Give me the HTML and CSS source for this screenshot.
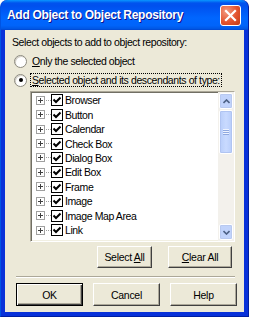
FILE: index.html
```html
<!DOCTYPE html>
<html lang="en">
<head>
    <meta charset="UTF-8">
    <title>Add Object to Object Repository</title>
    <link rel="stylesheet" href="styles.css">
</head>
<body>
    <div class="window">
        <div class="titlebar">
            <span class="title">Add Object to Object Repository</span>
            <span class="close">
                <svg width="13" height="13" viewBox="0 0 13 13">
                    <path d="M2 2 L11 11 M11 2 L2 11" stroke="#fff" stroke-width="2.2" stroke-linecap="square"/>
                </svg>
            </span>
        </div>
        <div class="content">
            <p class="intro">Select objects to add to object repository:</p>

            <label class="radio">
                <span class="radio-dot"></span>
                <span class="radio-text"><u>O</u>nly the selected object</span>
            </label>
            <label class="radio">
                <span class="radio-dot checked"></span>
                <span class="radio-text focus"><u>S</u>elected object and its descendants of type:</span>
            </label>

            <div class="listbox">
                <ul class="tree">
                    <li><span class="expander"></span><span class="check"></span>Browser</li>
                    <li><span class="expander"></span><span class="check"></span>Button</li>
                    <li><span class="expander"></span><span class="check"></span>Calendar</li>
                    <li><span class="expander"></span><span class="check"></span>Check Box</li>
                    <li><span class="expander"></span><span class="check"></span>Dialog Box</li>
                    <li><span class="expander"></span><span class="check"></span>Edit Box</li>
                    <li><span class="expander"></span><span class="check"></span>Frame</li>
                    <li><span class="expander"></span><span class="check"></span>Image</li>
                    <li><span class="expander"></span><span class="check"></span>Image Map Area</li>
                    <li><span class="expander"></span><span class="check"></span>Link</li>
                </ul>
                <div class="scrollbar">
                    <span class="sb-btn">
                        <svg width="7" height="5" viewBox="0 0 7 5"><path d="M0.5 4 L3.5 1 L6.5 4" fill="none" stroke="#4d6185" stroke-width="1.6"/></svg>
                    </span>
                    <span class="sb-thumb"><span class="grip"></span></span>
                    <span class="sb-track"></span>
                    <span class="sb-btn">
                        <svg width="7" height="5" viewBox="0 0 7 5"><path d="M0.5 1 L3.5 4 L6.5 1" fill="none" stroke="#4d6185" stroke-width="1.6"/></svg>
                    </span>
                </div>
            </div>

            <div class="list-buttons">
                <button class="btn btn-small">Select <u>A</u>ll</button>
                <button class="btn btn-small"><u>C</u>lear All</button>
            </div>

            <div class="separator"></div>

            <div class="dialog-buttons">
                <button class="btn default">OK</button>
                <button class="btn">Cancel</button>
                <button class="btn">Help</button>
            </div>
        </div>
    </div>
</body>
</html>
```

FILE: styles.css
```css
body {
    margin: 0;
    background: #fff;
    font-family: "Liberation Sans", Arial, sans-serif;
    font-size: 10.5px;
    letter-spacing: -0.4px;
    color: #000;
}

.window {
    width: 249px;
    height: 317px;
    display: flex;
    flex-direction: column;
    background: #0831d9;
    border-radius: 7px 7px 0 0;
    box-sizing: border-box;
    padding: 0 4px 4px 4px;
    border-left: 1px solid #0054e3;
    border-right: 1px solid #001ea0;
    border-bottom: 1px solid #001ea0;
}

.titlebar {
    height: 30px;
    margin: 0 -4px;
    padding: 0 5px 0 6px;
    display: flex;
    align-items: center;
    justify-content: space-between;
    border-radius: 7px 7px 0 0;
    background: linear-gradient(#0997ff, #0053ee 10%, #0050ee 20%, #0066ff 60%, #0064fa 85%, #0058e6 95%, #0046d0);
}

.title {
    color: #fff;
    font-weight: bold;
    font-size: 12px;
    letter-spacing: -0.3px;
    text-shadow: 1px 1px #0f1089;
}

.close {
    width: 19px;
    height: 19px;
    display: flex;
    align-items: center;
    justify-content: center;
    border: 1px solid #fff;
    border-radius: 3px;
    background: radial-gradient(circle at 30% 30%, #f39a80, #e3542f 55%, #c23b14);
    margin-right: 2px;
}

.content {
    flex: 1;
    background: #ece9d8;
}

.intro {
    margin: 5px 0 0 7px;
    line-height: 14px;
}

.radio {
    display: flex;
    align-items: center;
    margin-left: 9px;
    height: 14px;
    margin-top: 5px;
}

.radio-dot {
    width: 11px;
    height: 11px;
    border-radius: 50%;
    background: #fff;
    border: 1px solid #8c8a7f;
    box-shadow: inset 1px 1px 0 #d4d0c8;
    margin-right: 3px;
    position: relative;
}

.radio-dot.checked::after {
    content: "";
    position: absolute;
    left: 3.5px;
    top: 3.5px;
    width: 4px;
    height: 4px;
    border-radius: 50%;
    background: #000;
}

.radio-text {
    padding: 0 1px;
    border: 1px dotted transparent;
}

.radio-text.focus {
    border-color: #000;
}

.listbox {
    margin: 4px 9px 0 25px;
    height: 149px;
    display: flex;
    background: #fff;
    border-top: 1px solid #aca899;
    border-left: 1px solid #aca899;
    border-right: 1px solid #fff;
    border-bottom: 1px solid #fff;
    box-shadow: inset 1px 1px 0 #716f64, inset -1px -1px 0 #f1efe2;
}

.tree {
    flex: 1;
    list-style: none;
    margin: 0;
    padding: 1px 0 0 5px;
}

.tree li {
    height: 14.45px;
    display: flex;
    align-items: center;
    white-space: nowrap;
    overflow: hidden;
}

.expander {
    width: 7px;
    height: 7px;
    border: 1px solid #a0a0a0;
    margin-right: 1px;
    position: relative;
    background: #fff;
}

.expander::before {
    content: "";
    position: absolute;
    left: 1px;
    top: 3px;
    width: 5px;
    height: 1px;
    background: #404040;
}

.expander::after {
    content: "";
    position: absolute;
    left: 3px;
    top: 1px;
    width: 1px;
    height: 5px;
    background: #404040;
}

.check {
    width: 10px;
    height: 10px;
    border: 1.5px solid #000;
    margin-left: 5px;
    margin-right: 2px;
    background: #fff url("data:image/svg+xml,%3Csvg xmlns='http://www.w3.org/2000/svg' width='10' height='10'%3E%3Cpath d='M1.5 4.5 L4 7 L8.5 2.5' fill='none' stroke='%23000' stroke-width='2'/%3E%3C/svg%3E") no-repeat;
    position: relative;
}

.check::before {
    content: "";
    position: absolute;
    left: -6.5px;
    top: 4.5px;
    width: 5px;
    border-top: 1px dotted #a0a0a0;
}

.scrollbar {
    width: 16px;
    display: flex;
    flex-direction: column;
    background: #f3f1ec;
    padding: 1px 0;
}

.sb-btn {
    height: 14px;
    margin: 0 1px;
    display: flex;
    align-items: center;
    justify-content: center;
    border: 1px solid #fff;
    border-radius: 2px;
    background: #c1d3fb;
    box-shadow: 0 0 0 1px #b8c9f0 inset;
}

.sb-thumb {
    height: 42px;
    margin: 1px 1px 0;
    border: 1px solid #fff;
    border-radius: 2px;
    background: linear-gradient(90deg, #b8cdfa, #c9daff 50%, #b8cdfa);
    box-shadow: 0 0 0 1px #b0c4f2 inset;
    display: flex;
    align-items: center;
    justify-content: center;
}

.grip {
    width: 6px;
    height: 6px;
    background: repeating-linear-gradient(#eef3ff 0 1px, #8fa8e0 1px 2px);
}

.sb-track {
    flex: 1;
}

.list-buttons {
    display: flex;
    justify-content: flex-end;
    gap: 16px;
    margin: 4px 12px 0 0;
}

.btn {
    font-family: "Liberation Sans", Arial, sans-serif;
    font-size: 10.5px;
    letter-spacing: -0.3px;
    color: #000;
    width: 67px;
    height: 23px;
    padding: 0;
    background: #ece9d8;
    border: 1px solid;
    border-color: #fff #404040 #404040 #fff;
    box-shadow: inset -1px -1px 0 #aca899;
}

.btn-small {
    height: 22px;
    width: 64px;
}

.btn-small:first-child {
    width: 55px;
}

.btn.default {
    border: 1px solid #000;
    box-shadow: inset 1px 1px 0 #fff, inset -1px -1px 0 #404040, inset -2px -2px 0 #aca899;
}

.separator {
    margin: 8px 9px 0 11px;
    height: 1px;
    background: #aca899;
    border-bottom: 1px solid #fff;
}

.dialog-buttons {
    display: flex;
    gap: 10px;
    margin: 5px 0 0 11px;
}
```
